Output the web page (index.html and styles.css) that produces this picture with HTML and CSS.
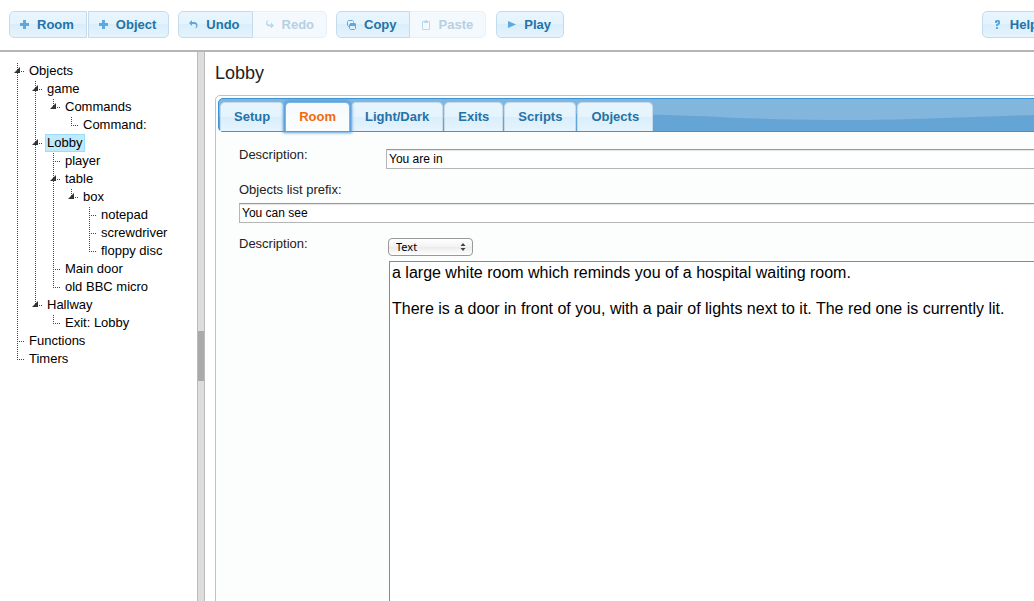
FILE: index.html
```html
<!DOCTYPE html>
<html lang="en">
<head>
    <meta charset="UTF-8">
    <meta name="viewport" content="width=device-width, initial-scale=1.0">
    <title>Lobby - Editor</title>
    <link rel="stylesheet" href="styles.css">
</head>
<body>

    <header class="toolbar">
        <div class="button-set">
            <button type="button" class="btn"><svg class="icon" viewBox="0 0 10 10"><path d="M3 0h3v3h3v3h-3v3h-3v-3h-3v-3h3z"/></svg>Room</button>
            <button type="button" class="btn"><svg class="icon" viewBox="0 0 10 10"><path d="M3 0h3v3h3v3h-3v3h-3v-3h-3v-3h3z"/></svg>Object</button>
        </div>
        <div class="button-set joined">
            <button type="button" class="btn"><svg class="icon" viewBox="0 0 10 10"><path d="M0 3L3 0v2h3q2.500 0.500 2.500 3.500q0 2-2 3v-1q1-1 0.500-2.500q-0.500-1-1.500-1H3v2z"/></svg>Undo</button>
            <button type="button" class="btn" disabled><svg class="icon" viewBox="0 0 10 10"><path d="M9 5.500L6 8.500v-2H4Q1 6 1 3q0-2 2-3v1q-1 1-0.500 2.500q0.500 1 1.500 1h2v-2z"/></svg>Redo</button>
        </div>
        <div class="button-set joined">
            <button type="button" class="btn"><svg class="icon" viewBox="0 0 10 10"><path class="line" d="M2.500 6.500h-1l-1-1v-4l1-1h4l1 1v1M3.500 3.500h4l1 1v4l-1 1h-4l-1-1v-4z"/><path d="M3 3h5l1 1v2H3z"/></svg>Copy</button>
            <button type="button" class="btn" disabled><svg class="icon" viewBox="0 0 10 10"><path class="line" d="M3 1.500H0.500v8h7v-8H5"/><path d="M2 1h1V0h2v1h1v2H2z"/></svg>Paste</button>
        </div>
        <div class="button-set play">
            <button type="button" class="btn"><svg class="icon" viewBox="0 0 10 10"><path d="M1 1L9 4.500L1 8z"/></svg>Play</button>
        </div>
        <div class="button-set help">
            <button type="button" class="btn"><svg class="icon" viewBox="0 0 10 10"><path d="M2 3V1l1-1h3l1 1v3L5 5.500V6H3V4.500L5 3V2H4v1zM3 7h2v2H3z"/></svg>Help</button>
        </div>
    </header>

    <main class="workspace">
        <nav class="sidebar">
            <ul class="tree">
                <li><button type="button" class="toggle" aria-label="Toggle Objects"></button><a href="#">Objects</a>
                    <ul>
                        <li><button type="button" class="toggle" aria-label="Toggle game"></button><a href="#">game</a>
                            <ul>
                                <li><button type="button" class="toggle" aria-label="Toggle Commands"></button><a href="#">Commands</a>
                                    <ul>
                                        <li><a href="#">Command:</a></li>
                                    </ul>
                                </li>
                            </ul>
                        </li>
                        <li><button type="button" class="toggle" aria-label="Toggle Lobby"></button><a href="#" class="selected">Lobby</a>
                            <ul>
                                <li><a href="#">player</a></li>
                                <li><button type="button" class="toggle" aria-label="Toggle table"></button><a href="#">table</a>
                                    <ul>
                                        <li><button type="button" class="toggle" aria-label="Toggle box"></button><a href="#">box</a>
                                            <ul>
                                                <li><a href="#">notepad</a></li>
                                                <li><a href="#">screwdriver</a></li>
                                                <li><a href="#">floppy disc</a></li>
                                            </ul>
                                        </li>
                                    </ul>
                                </li>
                                <li><a href="#">Main door</a></li>
                                <li><a href="#">old BBC micro</a></li>
                            </ul>
                        </li>
                        <li><button type="button" class="toggle" aria-label="Toggle Hallway"></button><a href="#">Hallway</a>
                            <ul>
                                <li><a href="#">Exit: Lobby</a></li>
                            </ul>
                        </li>
                    </ul>
                </li>
                <li><a href="#">Functions</a></li>
                <li><a href="#">Timers</a></li>
            </ul>
        </nav>

        <div class="splitter"><div class="grip"></div></div>

        <section class="content">
            <h1>Lobby</h1>
            <div class="panel">
                <div class="tabs" role="tablist">
                    <button type="button" class="tab" role="tab">Setup</button>
                    <button type="button" class="tab active" role="tab" aria-selected="true">Room</button>
                    <button type="button" class="tab" role="tab">Light/Dark</button>
                    <button type="button" class="tab" role="tab">Exits</button>
                    <button type="button" class="tab" role="tab">Scripts</button>
                    <button type="button" class="tab" role="tab">Objects</button>
                </div>
                <form class="room-form">
                    <div class="row">
                        <label for="description">Description:</label>
                        <input type="text" id="description" class="input-field" value="You are in">
                    </div>
                    <div class="stack">
                        <label for="prefix">Objects list prefix:</label>
                        <input type="text" id="prefix" class="input-field" value="You can see">
                    </div>
                    <div class="row">
                        <label for="descriptionType">Description:</label>
                        <div class="editor">
                            <select id="descriptionType">
                                <option>Text</option>
                            </select>
                            <textarea aria-label="Description text">a large white room which reminds you of a hospital waiting room.

There is a door in front of you, with a pair of lights next to it. The red one is currently lit.</textarea>
                        </div>
                    </div>
                </form>
            </div>
        </section>
    </main>

</body>
</html>
```
FILE: styles.css
```css
* {
    margin: 0;
    padding: 0;
    box-sizing: border-box;
}

body {
    font-family: "Liberation Sans", Arial, sans-serif;
    font-size: 13px;
    color: #222;
    background-color: #fff;
    height: 100vh;
    overflow: hidden;
}

button,
input,
select,
textarea {
    font-family: inherit;
}

/* Toolbar */
.toolbar {
    display: flex;
    gap: 9px;
    height: 52px;
    padding: 11px 0 0 9px;
    border-bottom: 2px solid #b5b5b5;
}

.button-set {
    display: flex;
    gap: 1px;
    height: 27px;
}

.joined {
    gap: 0;
}

.play {
    margin-left: 1px;
}

/* the last button runs past the window edge */
.help {
    margin-left: auto;
    margin-right: -17px;
}

.btn {
    display: flex;
    align-items: center;
    gap: 7px;
    padding: 0 12px 0 10px;
    border: 1px solid #c5dbec;
    background: linear-gradient(#e8f5fe 0, #e4f3fd 48%, #d9eefb 50%, #e6f4fe 100%);
    color: #2472a6;
    font-size: 13px;
    font-weight: bold;
    white-space: nowrap;
    cursor: pointer;
}

.btn:first-child {
    border-radius: 5px 0 0 5px;
}

.btn:last-child {
    border-radius: 0 5px 5px 0;
}

.btn:only-child {
    border-radius: 5px;
}

.btn:disabled {
    padding-left: 12px;
    border-color: #e7f0f8;
    border-left: none;
    background: #f4f9fe;
    color: #b6d0e3;
    cursor: default;
}

.icon {
    width: 10px;
    height: 10px;
    fill: #5fa8dc;
}

.icon .line {
    fill: none;
    stroke: #5fa8dc;
}

.btn:disabled .icon {
    opacity: 0.4;
}

/* Main area */
.workspace {
    display: flex;
    height: calc(100vh + 7px);
}

.sidebar {
    width: 197px;
    flex-shrink: 0;
    padding: 10px 8px;
}

/* Tree */
.tree,
.tree ul {
    list-style: none;
}

.tree li {
    padding-left: 19px;
    line-height: 18px;
    white-space: nowrap;
    background-image:
        repeating-linear-gradient(to right, #444 0, #444 1px, transparent 1px, transparent 2px),
        repeating-linear-gradient(#444 0, #444 1px, transparent 1px, transparent 2px);
    background-repeat: no-repeat;
    background-position: 9px 9px, 9px 1px;
    background-size: 7px 1px, 1px 100%;
}

.tree li:last-child {
    background-size: 7px 1px, 1px 9px;
}

.tree ul {
    margin-left: -1px;
}

.tree a {
    display: inline-block;
    height: 18px;
    padding: 0 2px 0 1px;
    border: 1px solid transparent;
    line-height: 16px;
    color: #000;
    text-decoration: none;
    vertical-align: top;
}

.tree a.selected {
    background-color: #beebff;
    border-color: #99defd;
}

.toggle {
    width: 6px;
    height: 6px;
    margin: 5px 7px 0 -13px;
    border: none;
    background-color: #333;
    clip-path: polygon(100% 0, 100% 100%, 0 100%);
    vertical-align: top;
    cursor: pointer;
}

/* Splitter */
.splitter {
    width: 8px;
    flex-shrink: 0;
    display: flex;
    align-items: center;
    border: solid #bbb;
    border-width: 0 1px;
    background-color: #ddd;
}

.grip {
    width: 100%;
    height: 50px;
    background-color: #aaa;
}

.content {
    flex: 1;
    min-width: 0;
    display: flex;
    flex-direction: column;
    padding: 10px 0 0 10px;
}

h1 {
    font-size: 18px;
    font-weight: normal;
    line-height: 22px;
    margin-bottom: 11px;
}

/* the panel is wider than the window */
.panel {
    flex: 1;
    display: flex;
    flex-direction: column;
    margin-right: -20px;
    padding: 2px;
    border: 1px solid #a6c9e2;
    border-radius: 5px;
    background-color: #fcfdfd;
}

.tabs {
    display: flex;
    gap: 1px;
    height: 34px;
    padding: 3px 0 0 1px;
    border: 1px solid #3a94d6;
    border-radius: 5px;
    background: #64a5d6 url("data:image/svg+xml,%3Csvg xmlns='http://www.w3.org/2000/svg' width='500' height='32'%3E%3Cpath d='M0 0H500V18C460 16 420 15 376 15C290 15 220 21 126 21C80 21 40 20 0 18Z' fill='%2382b6dd'/%3E%3C/svg%3E") 0 0;
}

.tab {
    padding: 0 13px 2px;
    border: 1px solid #c5dbec;
    border-bottom: none;
    border-radius: 5px 5px 0 0;
    background: linear-gradient(#e6f4fe 0, #e6f4fe 48%, #d9eefb 50%, #e6f4fe 100%);
    color: #2472a6;
    font-size: 13px;
    font-weight: bold;
    cursor: pointer;
}

.tab.active {
    z-index: 1;
    background: linear-gradient(#f6fafd, #fcfdfd);
    border-color: #79b7e7;
    color: #f26a0c;
    box-shadow: 0 0 3px 2px #5c9fdc;
}

/* Form */
.room-form {
    flex: 1;
    display: flex;
    flex-direction: column;
    padding: 17px 0 0 21px;
}

.row {
    display: flex;
}

.row label {
    width: 147px;
    flex-shrink: 0;
}

.room-form label {
    line-height: 12px;
}

.input-field {
    width: 100%;
    height: 20px;
    padding: 0 2px;
    border: 1px solid #b5b5b5;
    border-top-color: #999;
    background-color: #fff;
    box-shadow: inset 0 1px 1px #e5e5e5;
    color: #000;
    font-size: 12px;
}

.stack {
    display: flex;
    flex-direction: column;
    gap: 7px;
    margin: 15px 0;
}

.row:last-child {
    flex: 1;
}

.editor {
    flex: 1;
    display: flex;
    flex-direction: column;
    align-items: flex-start;
    gap: 5px;
    padding-left: 2px;
}

select {
    width: 85px;
    height: 18px;
    padding: 0 7px;
    border: 1px solid #999;
    border-radius: 4px;
    appearance: none;
    background:
        url("data:image/svg+xml,%3Csvg xmlns='http://www.w3.org/2000/svg' width='6' height='8'%3E%3Cpath d='M3 0L5.500 3H0.500ZM0.500 5H5.500L3 8Z' fill='%23444'/%3E%3C/svg%3E") no-repeat right 6px center,
        linear-gradient(#fff, #f2f2f2 50%, #ebebeb 50%, #fff);
    color: #000;
    font-family: "Noto Sans", sans-serif;
    font-size: 11px;
    line-height: 14px;
}

textarea {
    flex: 1;
    width: 100%;
    margin-left: 1px;
    padding: 2px;
    border: 1px solid #888;
    background-color: #fff;
    color: #000;
    font-size: 16px;
    line-height: 18px;
    resize: none;
}
```
